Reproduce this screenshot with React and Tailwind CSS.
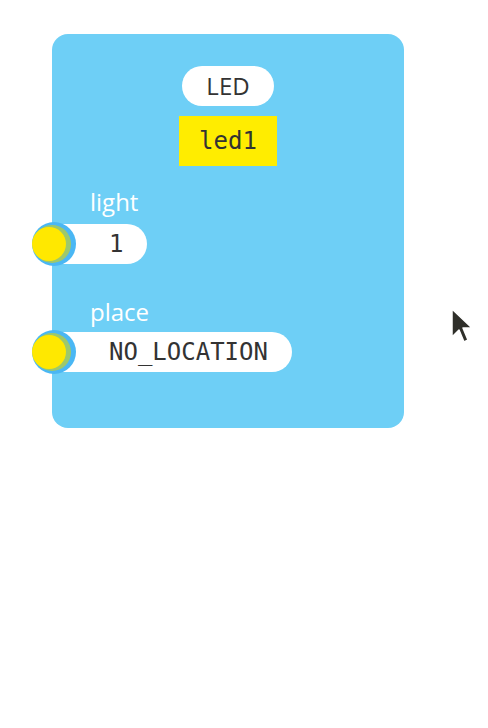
const sans = { fontFamily: '"Open Sans", "Noto Sans", sans-serif' };
const mono = { fontFamily: '"DejaVu Sans Mono", "Liberation Mono", monospace' };

function Port() {
  return (
    <svg
      className="absolute left-[-28px] top-1/2 -translate-y-1/2"
      width="56"
      height="52"
      viewBox="0 0 56 52"
    >
      <circle cx="30" cy="26" r="22" fill="#4ab7f4" />
      <circle cx="28" cy="26" r="19" fill="#9dc86b" />
      <circle cx="25" cy="26" r="17" fill="#ffe800" />
    </svg>
  );
}

function Input({ label, value, gap }) {
  return (
    <div>
      <div className={`pl-[38px] text-[24px] font-medium leading-[32px] text-white ${gap}`} style={sans}>
        {label}
      </div>
      <div className="relative">
        <div
          className="inline-flex h-[40px] items-center rounded-r-full bg-white pl-[57px] pr-[24px] text-[24px] text-[#333]"
          style={mono}
        >
          {value}
        </div>
        <Port />
      </div>
    </div>
  );
}

function Cursor() {
  return (
    <svg className="absolute left-[448px] top-[305px]" width="32" height="46" viewBox="0 0 32 46">
      <path
        d="M4 4 L4 32 L11 25 L16 37 L20 35 L15 23 L24 23 Z"
        fill="#2f2f2a"
        stroke="#ffffff"
        strokeWidth="1.5"
        strokeLinejoin="round"
      />
    </svg>
  );
}

export default function App() {
  return (
    <div className="relative h-[728px] w-[488px] bg-white">
      <div className="h-[34px]" />
      <div className="ml-[52px] h-[394px] w-[352px] rounded-[16px] bg-[#6ecff6]">
        <div className="flex flex-col items-center pt-[32px]">
          <div
            className="flex h-[40px] w-[92px] items-center justify-center rounded-full bg-white text-[24px] text-[#333]"
            style={sans}
          >
            LED
          </div>
          <div
            className="mt-[10px] flex h-[50px] w-[98px] items-center justify-center bg-[#ffed00] text-[24px] text-[#333]"
            style={mono}
          >
            led1
          </div>
        </div>
        <div className="mt-[20px] flex flex-col gap-[32px]">
          <Input label="light" value="1" gap="mb-[6px]" />
          <Input label="place" value="NO_LOCATION" gap="mb-[4px]" />
        </div>
      </div>
      <Cursor />
    </div>
  );
}
